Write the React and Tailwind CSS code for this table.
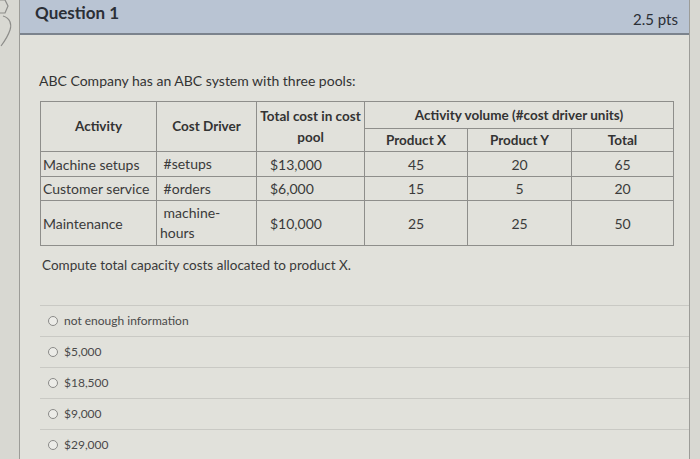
import React from 'react'

const cell = 'border border-[#8e8e8b] px-[3px] text-[14px] text-[#3a3a3a]'
const head = 'border border-[#8e8e8b] px-[3px] text-[13.5px] font-bold text-center text-[#333]'

function Radio({ label }) {
    return (
        <div className="h-[31px] border-t border-[#c9c9c4] flex items-center pl-[8px] gap-[6px]">
            <span className="w-[10px] h-[10px] rounded-full border border-[#8a8a88] bg-[#ececE8]" />
            <span className="text-[12px] text-[#4a4a4a]">{label}</span>
        </div>
    )
}

export default function App() {
    const rows = [
        { act: 'Machine setups', drv: ['\u00a0#setups'], cost: '$13,000', x: '45', y: '20', t: '65', h: 'h-[25px]' },
        { act: 'Customer service', drv: ['\u00a0#orders'], cost: '$6,000', x: '15', y: '5', t: '20', h: 'h-[24px]' },
        { act: 'Maintenance', drv: ['\u00a0machine-', 'hours'], cost: '$10,000', x: '25', y: '25', t: '50', h: 'h-[45px]' },
    ]

    return (
        <div className="w-[700px] h-[459px] overflow-hidden bg-[#d8d8d2] flex font-['Lato',sans-serif]">
            <div className="w-[19px] shrink-0">
                <svg width="19" height="60" viewBox="0 0 19 60" fill="none" stroke="#8d8d8a" strokeWidth="1.2">
                    <path d="M0 0 L5 0 L8 6 L5 13 L0 13" />
                    <path d="M3 16 C10 18 12 24 10 30 C8 36 4 42 1 46" />
                </svg>
            </div>
            <div className="w-[671px] shrink-0 border-l border-r border-[#9c9c98] bg-[#e1e1db] flex flex-col">
                <div className="h-[35px] shrink-0 bg-[#b9c4d3] border-b-2 border-[#7b838d] flex justify-between pl-[15px] pr-[11px]">
                    <div className="mt-[0px] text-[17px] font-bold text-[#2b2f36]">Question 1</div>
                    <div className="mt-[8px] text-[15px] text-[#2b2f36]">2.5 pts</div>
                </div>

                <div className="pl-[19px] pt-[35px] text-[14px] text-[#333]">
                    ABC Company has an ABC system with three pools:
                </div>

                <table className="ml-[20px] mt-[10px] w-[633px] border-collapse table-fixed">
                    <colgroup>
                        <col className="w-[116px]" />
                        <col className="w-[100px]" />
                        <col className="w-[108px]" />
                        <col className="w-[103px]" />
                        <col className="w-[104px]" />
                        <col className="w-[102px]" />
                    </colgroup>
                    <tbody>
                        <tr className="h-[27px]">
                            <td rowSpan={2} className={head}>Activity</td>
                            <td rowSpan={2} className={head}>Cost Driver</td>
                            <td rowSpan={2} className={`${head} !px-[1px] leading-[21px]`}>Total cost in cost pool</td>
                            <td colSpan={3} className={head}>Activity volume (#cost driver units)</td>
                        </tr>
                        <tr className="h-[23px]">
                            <td className={head}>Product X</td>
                            <td className={head}>Product Y</td>
                            <td className={head}>Total</td>
                        </tr>
                        {rows.map((r) => (
                            <tr key={r.act} className={r.h}>
                                <td className={`${cell} !px-[2px] whitespace-nowrap`}>{r.act}</td>
                                <td className={`${cell} leading-[20px]`}>
                                    {r.drv.map((d, i) => (
                                        <div key={i}>{d}</div>
                                    ))}
                                </td>
                                <td className={`${cell} pl-[13px]`}>{r.cost}</td>
                                <td className={`${cell} text-center`}>{r.x}</td>
                                <td className={`${cell} text-center`}>{r.y}</td>
                                <td className={`${cell} text-center`}>{r.t}</td>
                            </tr>
                        ))}
                    </tbody>
                </table>

                <div className="pl-[22px] pt-[9px] text-[13.5px] text-[#3a3a3a]">
                    Compute total capacity costs allocated to product X.
                </div>

                <div className="ml-[20px] mt-[30px]">
                    <Radio label="not enough information" />
                    <Radio label="$5,000" />
                    <Radio label="$18,500" />
                    <Radio label="$9,000" />
                    <Radio label="$29,000" />
                </div>
            </div>
        </div>
    )
}
